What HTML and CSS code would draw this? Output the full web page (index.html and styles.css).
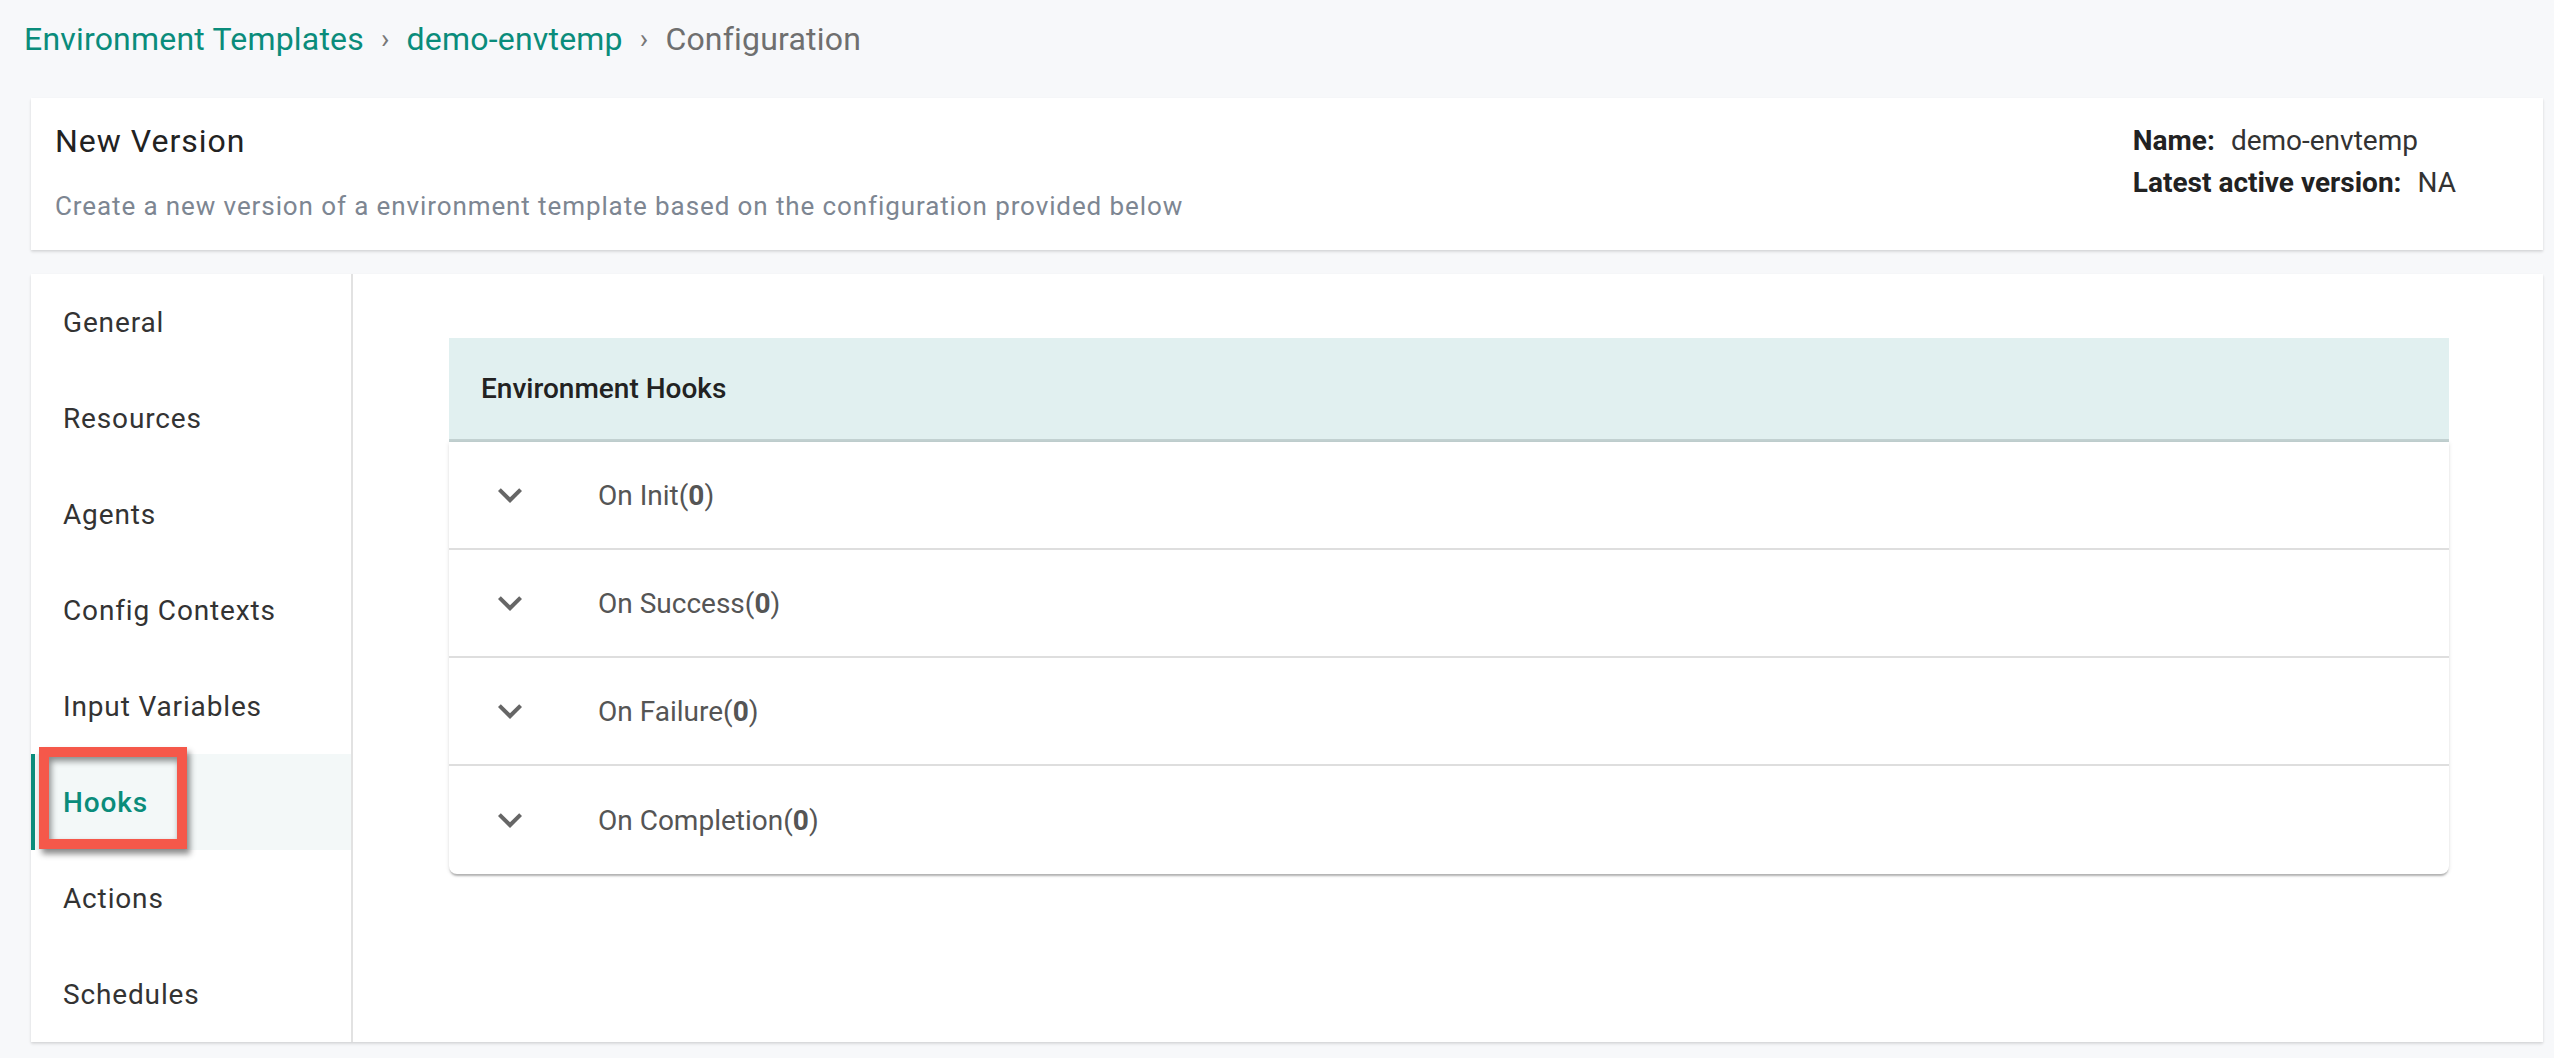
FILE: index.html
```html
<!DOCTYPE html>
<html>
<head>
  <title>Configuration - demo-envtemp</title>
  <link rel="stylesheet" href="styles.css">
</head>
<body>
  <div class="breadcrumbs">
    <a class="crumb" href="#">Environment Templates</a>
    <span class="crumb-sep">›</span>
    <a class="crumb" href="#">demo-envtemp</a>
    <span class="crumb-sep">›</span>
    <span class="crumb-current">Configuration</span>
  </div>

  <div class="page">
    <div class="card version-card">
      <div class="version-text">
        <h2 class="version-title">New Version</h2>
        <p class="version-desc">Create a new version of a environment template based on the configuration provided below</p>
      </div>
      <div class="version-info">
        <div class="info-line"><span class="info-label">Name:</span>demo-envtemp</div>
        <div class="info-line"><span class="info-label">Latest active version:</span>NA</div>
      </div>
    </div>

    <div class="card config-card">
      <ul class="side-menu">
        <li class="side-item">General</li>
        <li class="side-item">Resources</li>
        <li class="side-item">Agents</li>
        <li class="side-item">Config Contexts</li>
        <li class="side-item">Input Variables</li>
        <li class="side-item active">
          Hooks
          <span class="highlight-box"></span>
        </li>
        <li class="side-item">Actions</li>
        <li class="side-item">Schedules</li>
      </ul>

      <div class="config-content">
        <div class="hooks-panel">
          <div class="hooks-header">Environment Hooks</div>
          <div class="hooks-list">
            <div class="hook-row">
              <svg class="chevron" viewBox="0 0 24 24"><path d="M16.59 8.59L12 13.17 7.41 8.59 6 10l6 6 6-6z"/></svg>
              <span class="hook-name">On Init(<b>0</b>)</span>
            </div>
            <div class="hook-row">
              <svg class="chevron" viewBox="0 0 24 24"><path d="M16.59 8.59L12 13.17 7.41 8.59 6 10l6 6 6-6z"/></svg>
              <span class="hook-name">On Success(<b>0</b>)</span>
            </div>
            <div class="hook-row">
              <svg class="chevron" viewBox="0 0 24 24"><path d="M16.59 8.59L12 13.17 7.41 8.59 6 10l6 6 6-6z"/></svg>
              <span class="hook-name">On Failure(<b>0</b>)</span>
            </div>
            <div class="hook-row">
              <svg class="chevron" viewBox="0 0 24 24"><path d="M16.59 8.59L12 13.17 7.41 8.59 6 10l6 6 6-6z"/></svg>
              <span class="hook-name">On Completion(<b>0</b>)</span>
            </div>
          </div>
        </div>
      </div>
    </div>
  </div>
</body>
</html>
```

FILE: styles.css
```css
body {
  margin: 0;
  padding: 0;
  background-color: #f7f8fa;
  font-family: Roboto, "Liberation Sans", Arial, sans-serif;
  color: #222;
}

.breadcrumbs {
  padding: 19px 0 0 24px;
  height: 40px;
  line-height: 40px;
  font-size: 32px;
  letter-spacing: 0.2px;
  display: flex;
  align-items: center;
}

.crumb {
  color: #0a8c7b;
  text-decoration: none;
}

.crumb-sep {
  color: #777;
  font-size: 28px;
  margin: 0 17px;
}

.crumb-current {
  color: #6f6f6f;
}

.page {
  padding: 39px 11px 15px 31px;
}

.card {
  background-color: white;
  box-shadow: 0 2px 3px rgba(0, 0, 0, 0.1), 0 1px 2px rgba(0, 0, 0, 0.06);
}

/* header card */
.version-card {
  display: flex;
  justify-content: space-between;
  align-items: flex-start;
  padding: 22px 87px 26px 24px;
  margin-bottom: 24px;
}

.version-title {
  margin: 0;
  font-size: 32px;
  font-weight: 400;
  line-height: 42px;
  letter-spacing: 1px;
  color: #222;
}

.version-desc {
  margin: 26px 0 0 0;
  font-size: 26px;
  line-height: 36px;
  letter-spacing: 0.9px;
  color: #7d8692;
}

.version-info {
  font-size: 28px;
  line-height: 42px;
  color: #333;
}

.info-label {
  font-weight: 700;
  color: #222;
  margin-right: 16px;
}

/* config card */
.config-card {
  display: flex;
  height: 768px;
}

.side-menu {
  list-style-type: none;
  margin: 0;
  padding: 0;
  width: 320px;
  border-right: 2px solid #e2e2e2;
}

.side-item {
  position: relative;
  height: 96px;
  display: flex;
  align-items: center;
  padding-left: 32px;
  font-size: 28px;
  color: #333;
  letter-spacing: 0.85px;
}

.side-item.active {
  padding-left: 28px;
  border-left: 4px solid #0a8c7b;
  background-color: #f3f8f8;
  color: #0a8c7b;
  font-weight: 500;
}

.highlight-box {
  position: absolute;
  left: 4px;
  top: -7px;
  width: 128px;
  height: 82px;
  border: 10px solid #f5584a;
  box-shadow: 3px 5px 6px rgba(0, 0, 0, 0.45), inset 2px 4px 6px rgba(0, 0, 0, 0.45);
}

.config-content {
  flex: 1;
  padding: 64px 94px 0 96px;
}

.hooks-header {
  height: 101px;
  display: flex;
  align-items: center;
  padding: 0 32px;
  background-color: #e1f0f0;
  border-bottom: 3px solid #c3d2d2;
  font-size: 28px;
  font-weight: 500;
  color: #222;
}

.hooks-list {
  background-color: white;
  border-radius: 0 0 8px 8px;
  box-shadow: 0 3px 2px -1px rgba(0, 0, 0, 0.25), 0 1px 4px rgba(0, 0, 0, 0.12);
}

.hook-row {
  box-sizing: border-box;
  height: 108px;
  display: flex;
  align-items: center;
  padding-left: 37px;
  border-bottom: 2px solid #dedede;
}

.hook-row:last-child {
  border-bottom: none;
}

.chevron {
  width: 48px;
  height: 48px;
  fill: #666;
  margin-right: 64px;
}

.hook-name {
  font-size: 28px;
  color: #555;
}

.hook-name b {
  font-weight: 700;
}
```
